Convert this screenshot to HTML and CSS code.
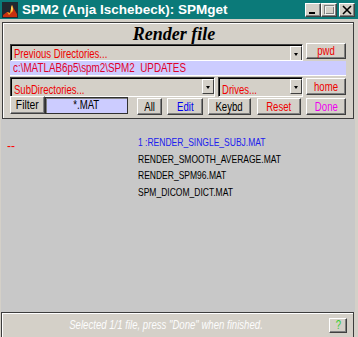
FILE: index.html
```html
<!DOCTYPE html>
<html lang="en">
<head>
    <meta charset="UTF-8">
    <title>SPM2 (Anja Ischebeck): SPMget</title>
    <link rel="stylesheet" href="styles.css">
</head>
<body>
    <div class="window">
        <div class="titlebar">
            <svg class="app-icon" width="16" height="16" viewBox="0 0 16 16">
                <rect width="16" height="16" fill="#202830"/>
                <path d="M1 13 L5 10 L8 11 L10 3 L12 7 L15 12 L15 15 L1 15 Z" fill="#c83010"/>
                <path d="M5 10 L8 11 L10 3 L11 9 L7 13 Z" fill="#f0a020"/>
                <path d="M9 6 L10 3 L11 7 L9.5 10 Z" fill="#ffe060"/>
            </svg>
            <span class="title">SPM2 (Anja Ischebeck): SPMget</span>
            <div class="win-btns">
                <span class="wbtn"><svg width="14" height="12" viewBox="0 0 14 12"><rect x="3" y="8" width="6" height="2" fill="#000"/></svg></span>
                <span class="wbtn"><svg width="14" height="12" viewBox="0 0 14 12"><rect x="2.5" y="1.5" width="9" height="8" fill="none" stroke="#808080"/><rect x="2" y="1" width="10" height="2" fill="#808080"/><rect x="3.5" y="2.5" width="9" height="8" fill="none" stroke="#fff" stroke-opacity="0.8"/></svg></span>
                <span class="wbtn close"><svg width="14" height="12" viewBox="0 0 14 12"><path d="M3 2 L11 10 M11 2 L3 10" stroke="#000" stroke-width="1.6"/></svg></span>
            </div>
        </div>

        <div class="client">
            <div class="panel">
                <div class="panel-title">Render file</div>

                <div class="row row-prev">
                    <div class="popup grow"><span class="label red">Previous Directories...</span><span class="arrow"></span></div>
                    <button class="btn red w40 lift"><span>pwd</span></button>
                </div>

                <div class="path"><span class="label">c:\MATLAB6p5\spm2\SPM2&nbsp; UPDATES</span></div>

                <div class="row row-sub">
                    <div class="popup tall subdirs"><span class="label red">SubDirectories...</span><span class="arrow"></span></div>
                    <div class="popup tall drives"><span class="label red">Drives...</span><span class="arrow"></span></div>
                    <button class="btn red w40 drop"><span>home</span></button>
                </div>

                <div class="row row-tools">
                    <button class="btn filter"><span>Filter</span></button>
                    <div class="filter-field"><span>*.MAT</span></div>
                    <button class="btn all"><span>All</span></button>
                    <button class="btn blue edit"><span>Edit</span></button>
                    <button class="btn keybd"><span>Keybd</span></button>
                    <button class="btn red reset"><span>Reset</span></button>
                    <button class="btn magenta w40"><span>Done</span></button>
                </div>
            </div>

            <div class="files">
                <div class="dots">--</div>
                <ul class="file-list">
                    <li class="selected">1 :RENDER_SINGLE_SUBJ.MAT</li>
                    <li>RENDER_SMOOTH_AVERAGE.MAT</li>
                    <li>RENDER_SPM96.MAT</li>
                    <li>SPM_DICOM_DICT.MAT</li>
                </ul>
            </div>

            <div class="status">
                <span class="status-text"><span>Selected 1/1 file, press "Done" when finished.</span></span>
                <button class="btn help"><span>?</span></button>
            </div>
        </div>
    </div>
</body>
</html>
```

FILE: styles.css
```css
* {
    margin: 0;
    padding: 0;
    box-sizing: border-box;
}

html, body {
    width: 358px;
    height: 337px;
    overflow: hidden;
    background-color: #d4d0c8;
    font-family: "Liberation Sans", Arial, sans-serif;
}

.window {
    display: flex;
    flex-direction: column;
    height: 337px;
}

/* title bar */
.titlebar {
    height: 19px;
    background-color: #0b7a79;
    display: flex;
    align-items: center;
    padding-left: 2px;
}

.app-icon {
    flex: none;
}

.title {
    margin-left: 4px;
    color: #fff;
    font-weight: bold;
    font-size: 13.5px;
}

.win-btns {
    margin-left: auto;
    display: flex;
    padding-right: 3px;
}

.wbtn {
    width: 16px;
    height: 14px;
    display: flex;
    align-items: center;
    justify-content: center;
    background-color: #d4d0c8;
    border: 1px solid;
    border-color: #fff #404040 #404040 #fff;
    box-shadow: inset -1px -1px 0 #808080;
}

.wbtn.close {
    margin-left: 2px;
}

/* client area */
.client {
    flex: 1;
    display: flex;
    flex-direction: column;
    padding: 3px 4px 0 1px;
}

.panel {
    margin-left: 1px;
    border: 1px solid #3c3c3c;
    box-shadow: inset 1px 1px 0 #fff;
    padding: 0 7px 4px 7px;
}

.panel-title {
    height: 21px;
    text-align: center;
    font-family: "Liberation Serif", "Times New Roman", serif;
    font-weight: bold;
    font-style: italic;
    font-size: 18px;
    line-height: 22px;
    color: #000;
    padding-right: 8px;
}

.row {
    display: flex;
    align-items: flex-start;
}

.row-prev {
    height: 17px;
    gap: 3px;
}

.row-sub {
    height: 20px;
    margin-top: 1px;
    gap: 3px;
}

.row-tools {
    height: 17px;
}

.grow {
    flex: 1;
}

.w40 {
    width: 40px;
}

.red { color: #ee0000; }
.blue { color: #0000ee; }
.magenta { color: #ee00ee; }

/* narrow text, the old X font is much slimmer than Arial */
.label {
    display: inline-block;
    white-space: nowrap;
    transform: scaleX(0.795);
    transform-origin: left center;
}

/* popup menus */
.popup {
    height: 17px;
    display: flex;
    align-items: flex-start;
    justify-content: space-between;
    background-color: #d4d0c8;
    border: 1px solid;
    border-color: #404040 #fff #fff #404040;
    box-shadow: inset 1px 1px 0 #000;
    font-size: 12px;
    line-height: 14px;
    padding-left: 3px;
    overflow: hidden;
}

.popup .label {
    padding-top: 2px;
}

.popup.tall {
    height: 20px;
}

.popup.tall .label {
    padding-top: 5px;
}

.subdirs {
    width: 207px;
}

.drives {
    width: 86px;
}

.arrow {
    width: 12px;
    height: 15px;
    margin-top: 1px;
    flex: none;
    background-color: #d4d0c8;
    border: 1px solid;
    border-color: #fff #404040 #404040 #fff;
    position: relative;
}

.arrow::after {
    content: "";
    position: absolute;
    left: 3px;
    top: 6px;
    border-left: 2.5px solid transparent;
    border-right: 2.5px solid transparent;
    border-top: 3px solid #000;
}

.path {
    height: 15px;
    background-color: #ccccff;
    color: #e0002a;
    font-size: 12px;
    line-height: 13px;
    padding: 1px 0 0 3px;
    border-bottom: 1px solid #fff;
}

.path .label {
    transform: scaleX(0.82);
}

/* buttons */
.btn {
    height: 17px;
    background-color: #d4d0c8;
    border: 1px solid;
    border-color: #fff #404040 #404040 #fff;
    box-shadow: inset -1px -1px 0 #808080;
    font-family: inherit;
    font-size: 12px;
    line-height: 14px;
    text-align: center;
    flex: none;
    white-space: nowrap;
}

.btn span,
.filter-field span {
    display: inline-block;
    transform: scaleX(0.8);
}

.btn.lift {
    margin-top: -1px;
    height: 16px;
}

.btn.drop {
    margin-top: 1px;
}

.filter {
    width: 35px;
    height: 18px;
    margin-top: -1px;
    color: #000;
}

.filter span {
    transform: scaleX(0.86);
}

.filter-field {
    width: 84px;
    height: 17px;
    background-color: #ccccff;
    border: 1px solid #303030;
    box-shadow: inset 1px 1px 0 #808080;
    text-align: center;
    font-size: 12px;
    line-height: 15px;
    color: #000;
    margin-right: 9px;
}

.all {
    width: 25px;
    margin-top: 1px;
    margin-right: 5px;
}

.edit {
    width: 36px;
    margin-top: 1px;
    margin-right: 5px;
}

.keybd {
    width: 43px;
    margin-top: 1px;
    margin-right: 6px;
}

.reset {
    width: 44px;
    margin-top: 1px;
    margin-right: 5px;
}

.row-tools .w40 {
    margin-top: 1px;
}

/* file list */
.files {
    flex: 1;
    display: flex;
    background-color: #c8c8c8;
    padding: 15px 0 0 6px;
    margin-right: -1px;
}

.dots {
    width: 131px;
    color: #ff0000;
    font-size: 12px;
    line-height: 17px;
    padding-top: 4px;
    flex: none;
}

.file-list {
    list-style: none;
    font-size: 11.5px;
    line-height: 16.7px;
    color: #000;
    white-space: nowrap;
    transform: scaleX(0.74);
    transform-origin: left top;
}

.file-list .selected {
    color: #2020ee;
}

/* status bar */
.status {
    height: 25px;
    display: flex;
    align-items: center;
    border: 1px solid #3c3c3c;
    border-bottom: none;
    box-shadow: inset 1px 1px 0 #fff;
    padding-right: 6px;
}

.status-text {
    flex: 1;
    text-align: center;
    color: #fcfcfc;
    font-style: italic;
    font-size: 12px;
    white-space: nowrap;
}

.status-text span {
    display: inline-block;
    transform: scaleX(0.8);
}

.help {
    width: 18px;
    height: 15px;
    color: #33cc33;
    font-size: 12px;
    line-height: 12px;
}
```
